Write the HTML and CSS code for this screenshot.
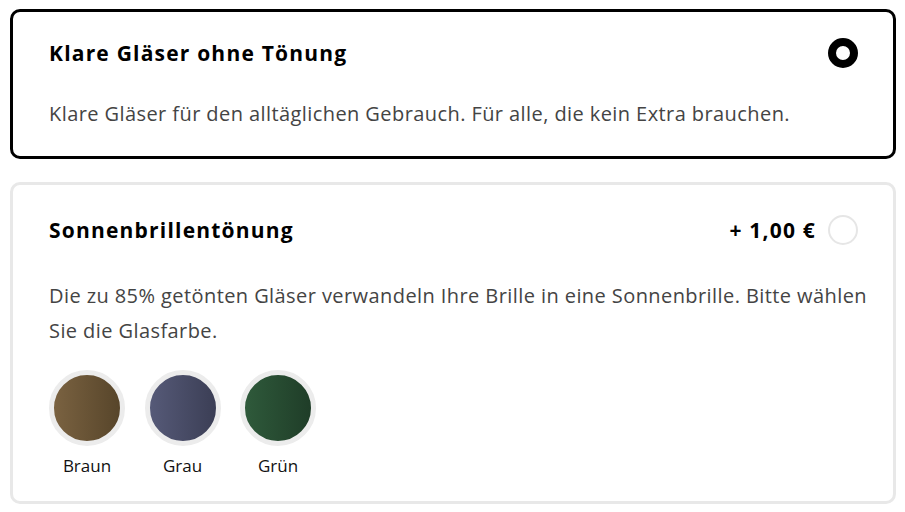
FILE: index.html
```html
<!DOCTYPE html>
<html lang="de">
<head>
<meta charset="utf-8">
<link rel="stylesheet" href="styles.css">
</head>
<body>
<div class="list">
  <div class="card selected">
    <div class="head">
      <div class="title">Klare Gläser ohne Tönung</div>
      <div class="right"><span class="radio on"></span></div>
    </div>
    <p class="desc">Klare Gläser für den alltäglichen Gebrauch. Für alle, die kein Extra brauchen.</p>
  </div>
  <div class="card second">
    <div class="head">
      <div class="title">Sonnenbrillentönung</div>
      <div class="right"><span class="price">+ 1,00 €</span><span class="radio"></span></div>
    </div>
    <p class="desc">Die zu 85% getönten Gläser verwandeln Ihre Brille in eine Sonnenbrille. Bitte wählen Sie die Glasfarbe.</p>
    <div class="swatches">
      <div class="swatch"><span class="dot brown"></span><span class="label">Braun</span></div>
      <div class="swatch"><span class="dot grey"></span><span class="label">Grau</span></div>
      <div class="swatch"><span class="dot green"></span><span class="label">Grün</span></div>
    </div>
  </div>
</div>
</body>
</html>
```
FILE: styles.css
```css
* { box-sizing: border-box; }
body {
  margin: 0;
  padding: 9px 9px 0 10px;
  background: #fff;
  font-family: "Open Sans", Lato, sans-serif;
  color: #111;
}
.list { display: flex; flex-direction: column; gap: 23px; }
.card {
  border: 3px solid #e8e8e8;
  border-radius: 10px;
  padding: 26px 36px 25px 36px;
}
.card.second { padding-top: 30px; padding-bottom: 24px; }
.card.selected { border-color: #000; }
.head {
  display: flex;
  align-items: center;
  justify-content: space-between;
  height: 30px;
}
.title { font-size: 21px; font-weight: 700; color: #000; letter-spacing: 1.2px; }
.right { display: flex; align-items: center; gap: 12px; }
.price { font-size: 21px; font-weight: 700; color: #000; letter-spacing: 1.2px; }
.radio {
  width: 30px; height: 30px;
  border-radius: 50%;
  border: 2px solid #e6e6e6;
  display: inline-block;
  margin-right: -1px;
}
.radio.on { border: 8px solid #000; }
.desc {
  margin: 33px -14px 0 0;
  font-size: 20px;
  line-height: 35px;
  letter-spacing: 0.42px;
  color: #444;
}
.card.selected .desc { margin-top: 28px; }
.swatches { display: flex; gap: 19.5px; margin-top: 22px; }
.swatch { display: flex; flex-direction: column; align-items: center; gap: 8px; width: 76px; }
.dot {
  width: 76px; height: 76px; border-radius: 50%;
  border: 5px solid #ececec;
  display: block;
}
.brown { background: linear-gradient(90deg, #7a6241, #57452a); }
.grey { background: linear-gradient(90deg, #565a78, #3b3e55); }
.green { background: linear-gradient(90deg, #2f5a3b, #1f3d28); }
.label { font-size: 17px; color: #111; }
```
